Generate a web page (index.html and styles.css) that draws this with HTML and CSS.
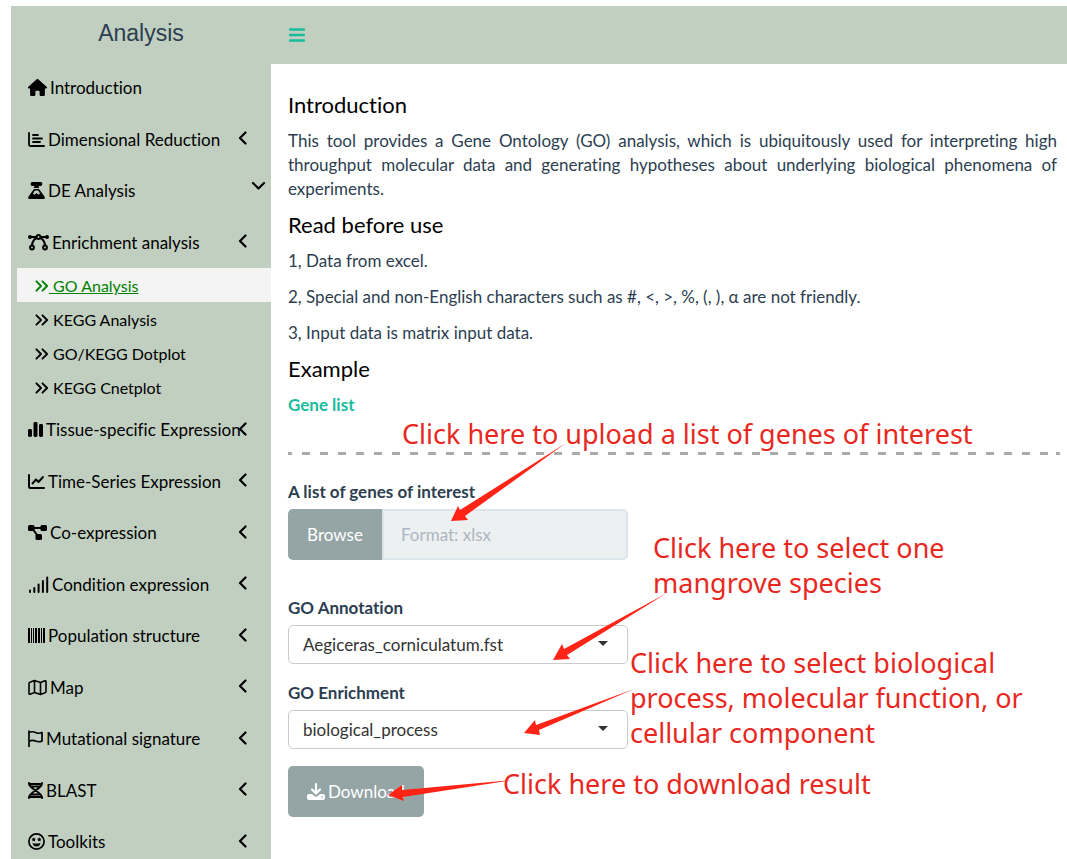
FILE: index.html
```html
<!DOCTYPE html>
<html lang="en">
<head>
<meta charset="utf-8">
<meta name="viewport" content="width=device-width, initial-scale=1">
<title>Analysis</title>
<link rel="stylesheet" href="styles.css">
</head>
<body>
<svg class="sprite" aria-hidden="true">
  <symbol id="chevron" viewBox="0 0 9 14"><path d="M7.5 1.5 2 7l5.500 5.500" fill="none" stroke="currentColor" stroke-width="2.200" stroke-linecap="round" stroke-linejoin="round"/></symbol>
  <symbol id="angles" viewBox="0 0 15 14"><path d="m1.500 2 5 5-5 5M8 2l5 5-5 5" fill="none" stroke="currentColor" stroke-width="2" stroke-linecap="round" stroke-linejoin="round"/></symbol>
</svg>
<div class="app">
  <aside class="sidebar">
    <h1 class="brand">Analysis</h1>
    <nav class="menu">
      <a class="item" href="#"><svg class="icon w19" viewBox="0 0 576 512"><path d="M575.8 255.5c0 18-15 32.100-32 32.100h-32l.7 160.200c0 2.700-.2 5.400-.5 8.100V472c0 22.100-17.900 40-40 40H392c-22.100 0-40-17.900-40-40V384c0-17.700-14.300-32-32-32h-64c-17.700 0-32 14.300-32 32v88c0 22.100-17.900 40-40 40h-80c-22.100 0-40-17.900-40-40V287.600H32c-18 0-32-14-32-32.100 0-9 3-17 10-24L266.400 8c7-7 15-8 22-8s15 2 21 7l255.400 224.500c8 7 12 15 11 24z"/></svg><span class="name">Introduction</span></a>
      <a class="item" href="#"><svg class="icon w17" viewBox="0 0 17 17"><path d="M1 2v11.500q0 1.500 1.500 1.500H16M5 4h5M5 7.500h9M5 11h7" fill="none" stroke="currentColor" stroke-width="1.800" stroke-linecap="round"/></svg><span class="name">Dimensional Reduction</span><svg class="chevron"><use href="#chevron"/></svg></a>
      <a class="item open" href="#"><svg class="icon w17" viewBox="0 0 17 17"><path d="M4 0h2q2.500-.8 5 0h2q1.500 .5 1.300 2T13 4h-2.500L11.300 6H5.700L6.500 4H4Q2.700 4 2.700 2T4 0zM6 7h5l5.500 7.500q1 2.500-1 2.500h-14q-2 0-1-2.500zm.8 1.500L5 11.500l1.500 1.300 2-1.800 2 1.800 1.500-1.300-1.800-3z" fill-rule="evenodd"/></svg><span class="name">DE Analysis</span><svg class="chevron"><use href="#chevron"/></svg></a>
      <a class="item" href="#"><svg class="icon w21" viewBox="0 0 21 17"><g fill="none" stroke="currentColor" stroke-width="2"><circle cx="10.500" cy="3" r="1.900"/><circle cx="4" cy="13.500" r="1.900"/><circle cx="17" cy="13.500" r="1.900"/><path d="M2 3h6.500M12.500 3H19M4 11.500Q4.500 6 8.500 4M17 11.500Q16.500 6 12.500 4"/></g><circle cx="2" cy="3" r="2"/><circle cx="19" cy="3" r="2"/></svg><span class="name">Enrichment analysis</span><svg class="chevron"><use href="#chevron"/></svg></a>
      <div class="submenu">
        <a class="subitem active" href="#"><svg class="angles"><use href="#angles"/></svg><span class="subname">&nbsp;GO Analysis</span></a>
        <a class="subitem" href="#"><svg class="angles"><use href="#angles"/></svg><span class="subname">&nbsp;KEGG Analysis</span></a>
        <a class="subitem" href="#"><svg class="angles"><use href="#angles"/></svg><span class="subname">&nbsp;GO/KEGG Dotplot</span></a>
        <a class="subitem" href="#"><svg class="angles"><use href="#angles"/></svg><span class="subname">&nbsp;KEGG Cnetplot</span></a>
      </div>
      <a class="item" href="#"><svg class="icon w15" viewBox="0 0 15 17"><rect y="8" width="4" height="8" rx="1.400"/><rect x="5.500" y="1" width="4" height="15" rx="1.400"/><rect x="11" y="3" width="4" height="13" rx="1.400"/></svg><span class="name">Tissue-specific Expression</span><svg class="chevron"><use href="#chevron"/></svg></a>
      <a class="item" href="#"><svg class="icon w17" viewBox="0 0 17 17"><path d="M1 2v11.500q0 1.500 1.500 1.500H16M4.500 10.500 8 6.500l2.500 2.500L15 4" fill="none" stroke="currentColor" stroke-width="2" stroke-linecap="round" stroke-linejoin="round"/></svg><span class="name">Time-Series Expression</span><svg class="chevron"><use href="#chevron"/></svg></a>
      <a class="item" href="#"><svg class="icon w19" viewBox="0 0 19 17"><path d="M5 4h9M4 4l6.500 9" stroke="currentColor" stroke-width="2"/><rect y="1" width="6.500" height="6" rx="1.500"/><rect x="12.500" y="1" width="6.500" height="6" rx="1.500"/><rect x="7.500" y="10" width="6.500" height="6" rx="1.500"/></svg><span class="name">Co-expression</span><svg class="chevron"><use href="#chevron"/></svg></a>
      <a class="item" href="#"><svg class="icon w21" viewBox="0 0 21 17"><path d="M2 14.500V16M6.300 12v4M10.600 8.500V16M14.900 5v11M19.200 1.500V16" fill="none" stroke="currentColor" stroke-width="2" stroke-linecap="round"/></svg><span class="name">Condition expression</span><svg class="chevron"><use href="#chevron"/></svg></a>
      <a class="item" href="#"><svg class="icon w17" viewBox="0 0 17 17"><path d="M0 1h2v15H0zM3 1h1v15H3zM5 1h1v15H5zM7 1h2v15H7zM10 1h2v15h-2zM13 1h1v15h-1zM15 1h2v15h-2z"/></svg><span class="name">Population structure</span><svg class="chevron"><use href="#chevron"/></svg></a>
      <a class="item" href="#"><svg class="icon w19" viewBox="0 0 19 17"><path d="M1 4.500Q1 3.500 2 3.200L6.500 1.500l6 2L17 1.800q1-.3 1 .7v10q0 1-1 1.300l-4.500 1.700-6-2L2 15.200q-1 .3-1-.7zM6.500 1.500v12M12.500 3.500v12" fill="none" stroke="currentColor" stroke-width="1.600" stroke-linejoin="round"/></svg><span class="name">Map</span><svg class="chevron"><use href="#chevron"/></svg></a>
      <a class="item" href="#"><svg class="icon w15" viewBox="0 0 15 17"><path d="M1 1v15.500M1 2.500q3.500-1.500 6.500 0t6.500 0V11q-3 1.500-6.500 0T1 11.500" fill="none" stroke="currentColor" stroke-width="1.700" stroke-linecap="round" stroke-linejoin="round"/></svg><span class="name">Mutational signature</span><svg class="chevron"><use href="#chevron"/></svg></a>
      <a class="item" href="#"><svg class="icon w15" viewBox="0 0 15 17"><path d="M1 1v.5C1 7 14 10 14 15.500v.5M14 1v.5C14 7 1 10 1 15.500v.5M1 2h13M2.500 4.500h10M2.500 12.500h10M1 15h13" fill="none" stroke="currentColor" stroke-width="2" stroke-linecap="round"/></svg><span class="name">BLAST</span><svg class="chevron"><use href="#chevron"/></svg></a>
      <a class="item" href="#"><svg class="icon w17" viewBox="0 0 17 17"><circle cx="8.500" cy="8.500" r="7.600" fill="none" stroke="currentColor" stroke-width="1.700"/><path d="m5.700 4.300.7 1.300 1.500.2-1.100 1.100.3 1.500-1.400-.7-1.400.7.300-1.500-1.100-1.100 1.500-.2zM11.300 4.300l.7 1.300 1.500.2-1.100 1.100.3 1.500-1.400-.7-1.400.7.300-1.500-1.100-1.100 1.500-.2zM4.500 10q4 1.200 8 0-.8 3.500-4 3.500t-4-3.500z"/></svg><span class="name">Toolkits</span><svg class="chevron"><use href="#chevron"/></svg></a>
    </nav>
  </aside>
  <div class="page">
    <header class="topbar">
      <button class="toggle" type="button" aria-label="Toggle navigation"><svg width="16" height="14" viewBox="0 0 16 14"><path d="M1 1.500h14M1 7h14M1 12.500h14" stroke="currentColor" stroke-width="2.400" stroke-linecap="round"/></svg></button>
    </header>
    <main class="content">
      <h2 class="title">Introduction</h2>
      <p class="text justified">This tool provides a Gene Ontology (GO) analysis, which is ubiquitously used for interpreting high throughput molecular data and generating hypotheses about underlying biological phenomena of experiments.</p>
      <h2 class="title">Read before use</h2>
      <p class="text">1, Data from excel.</p>
      <p class="text">2, Special and non-English characters such as #, &lt;, &gt;, %, (, ), α are not friendly.</p>
      <p class="text">3, Input data is matrix input data.</p>
      <h2 class="title">Example</h2>
      <p class="text"><a class="link" href="#">Gene list</a></p>
      <hr class="divider">
      <form class="form">
        <div class="field upload-field">
          <label for="genes">A list of genes of interest</label>
          <div class="upload">
            <button class="browse" type="button">Browse</button>
            <input class="filename" id="genes" type="text" placeholder="Format: xlsx" readonly>
          </div>
        </div>
        <div class="field">
          <label for="annotation">GO Annotation</label>
          <div class="picker"><select id="annotation"><option>Aegiceras_corniculatum.fst</option></select></div>
        </div>
        <div class="field">
          <label for="enrichment">GO Enrichment</label>
          <div class="picker"><select id="enrichment"><option>biological_process</option></select></div>
        </div>
        <button class="download" type="button"><svg width="18" height="17" viewBox="0 0 18 17"><path d="M9 1.200v8.500M5 6.500l4 4 4-4" fill="none" stroke="currentColor" stroke-width="2.200" stroke-linecap="round" stroke-linejoin="round"/><path d="M2 11h3l2.300 2.100q1.700 1.300 3.400 0L13 11h3q2 0 2 2v2q0 2-2 2H2q-2 0-2-2v-2q0-2 2-2z"/><circle cx="15.300" cy="14" r=".8" fill="#95a5a6"/></svg>Download</button>
      </form>
    </main>
  </div>
  <div class="notes">
    <svg class="arrows" width="700" height="859" viewBox="0 0 700 859" aria-hidden="true"><path d="M566 443 460 510l-2-4-7 15 17-1-3-4zM667 593 564 649l-2-5-9 16 17-1-3-4zM634 689 536 725l-1-5-11 13 16 2-1-5zM513 780 402 790v-5l-14 10 16 6-1-4z"/></svg>
    <p class="note note-upload">Click here to upload a list of genes of interest</p>
    <p class="note note-species">Click here to select one<br>mangrove species</p>
    <p class="note note-process">Click here to select biological<br>process, molecular function, or<br>cellular component</p>
    <p class="note note-download">Click here to download result</p>
  </div>
</div>
</body>
</html>
```
FILE: styles.css
```css
* { box-sizing: border-box; }

body {
  margin: 0;
  background: #fff;
  color: #2c3e50;
  font: 17px/24px Lato, "Open Sans", sans-serif;
  font-variant-ligatures: none;
  text-rendering: optimizeLegibility;
}

button, input, select { font: inherit; }
h1, h2, p { margin: 0; font-weight: 400; }
svg { fill: currentColor; flex: none; }
.sprite { position: absolute; width: 0; height: 0; }

.app {
  position: relative;
  display: flex;
  height: 100vh;
  padding: 6px 0 0 11px;
  overflow: hidden;
}

.sidebar { flex: none; width: 260px; background: #c1cfc0; }
.brand {
  height: 56px;
  font: 23px/54px "Liberation Sans", Arial, sans-serif;
  text-align: center;
}

.item {
  display: flex;
  align-items: center;
  gap: 3px;
  padding: 13px 24px 13px 17px;
  color: #000;
  line-height: 1.5;
  text-decoration: none;
  white-space: nowrap;
}
.icon { height: 17px; }
.w15 { width: 15px; }
.w17 { width: 17px; }
.w19 { width: 19px; }
.w21 { width: 21px; }
.name { flex: 1; min-width: 0; }
.chevron { width: 9px; height: 14px; margin-bottom: 2px; }
.open { padding-right: 8px; }
.open .chevron { transform: rotate(-90deg); margin-bottom: 9px; }

.submenu { padding-left: 6px; }
.subitem {
  display: flex;
  align-items: center;
  height: 34px;
  padding: 2px 0 0 18px;
  color: #000;
  font-size: 16px;
  text-decoration: none;
}
.angles { width: 14px; height: 14px; }
.active { background: #f4f4f4; color: #008000; }
.active .subname { text-decoration: underline; }

.page { flex: 1; min-width: 0; }
.topbar { height: 58px; padding: 22px 18px; background: #c1cfc0; }
.toggle {
  display: block;
  padding: 0;
  border: 0;
  background: none;
  color: #18bc9c;
  line-height: 0;
}

.content { padding: 29px 10px 0 17px; }
.title { margin-bottom: 12px; color: #000; font-size: 22px; }
.text { margin-bottom: 12px; }
.justified { text-align: justify; }
.link { color: #18bc9c; font-weight: 700; text-decoration: none; }

.divider {
  height: 3px;
  margin: 35px -3px 25px 0;
  border: 0;
  background: repeating-linear-gradient(90deg, #aaa 0 8px, #fff 8px 18px) -4px 0;
}

.form { max-width: 340px; }
.field { display: flex; flex-direction: column; gap: 5px; margin-bottom: 17px; }
.field label { font-weight: 700; }
.upload-field { margin-bottom: 36px; }
.upload { display: flex; height: 51px; }
.browse {
  width: 94px;
  border: 0;
  border-radius: 5px 0 0 5px;
  background: #95a5a6;
  color: #fff;
}
.filename {
  flex: 1;
  min-width: 0;
  padding: 0 17px;
  border: 2px solid #dce4ec;
  border-radius: 0 5px 5px 0;
  background: #ecf0f1;
}
.filename::placeholder { color: #acb6c0; }

.picker { position: relative; }
.picker::after {
  content: "";
  position: absolute;
  top: 16px;
  right: 20px;
  border: 5px solid transparent;
  border-top-color: #333;
  border-bottom: 0;
}
select {
  display: block;
  width: 100%;
  height: 39px;
  padding: 0 14px;
  border: 1px solid #ccc;
  border-radius: 5px;
  appearance: none;
  background: #fff;
  color: #333;
}

.download {
  display: flex;
  align-items: center;
  gap: 3px;
  height: 51px;
  padding: 0 19px;
  border: 0;
  border-radius: 5px;
  background: #95a5a6;
  color: #fff;
}

/* Red callouts laid over the form */
.notes { position: absolute; top: 0; left: 0; color: #e8281e; pointer-events: none; }
.arrows { position: absolute; top: 0; left: 0; color: #ff2416; }
.note {
  position: absolute;
  font: 27px/35px "Noto Sans", "Open Sans", sans-serif;
  white-space: nowrap;
}
.note-upload { top: 416px; left: 402px; }
.note-species { top: 530px; left: 653px; }
.note-process { top: 645px; left: 630px; }
.note-download { top: 766px; left: 503px; }
```
